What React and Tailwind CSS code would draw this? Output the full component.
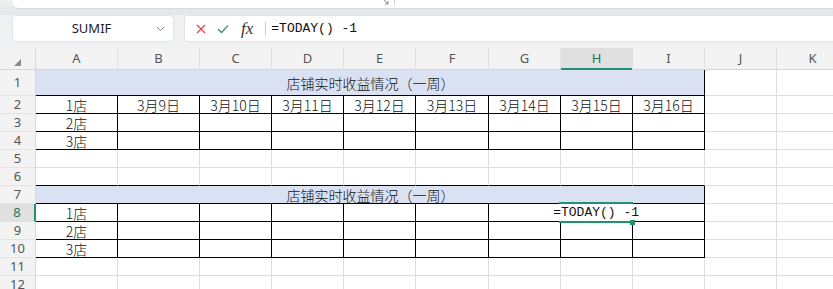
import React from "react";

const COLS = [
  { l: "A", w: 82 },
  { l: "B", w: 82 },
  { l: "C", w: 72 },
  { l: "D", w: 72 },
  { l: "E", w: 72 },
  { l: "F", w: 73 },
  { l: "G", w: 72 },
  { l: "H", w: 72 },
  { l: "I", w: 72 },
  { l: "J", w: 72 },
  { l: "K", w: 72 },
];

const DATES = ["3月9日", "3月10日", "3月11日", "3月12日", "3月13日", "3月14日", "3月15日", "3月16日"];
const TITLE = "店铺实时收益情况（一周）";
const cellFont = { fontFamily: '"Noto Sans CJK SC", "Noto Sans", sans-serif' };

function Cell({ children, black, blackB, blackR, noR, span, blue, h, active }) {
  const rb = noR ? "border-r-white" : black || blackR ? "border-r-black" : "border-r-[#dedede]";
  const bb = black || blackB ? "border-b-black" : "border-b-[#dedede]";
  return (
    <div
      className={
        "relative flex items-center justify-center border-r border-b text-[14px] font-light leading-[16px] text-[#111] whitespace-nowrap " +
        rb +
        " " +
        bb +
        " " +
        (blue ? "bg-[#d9e1f2] " : "bg-white ") +
        (span ? "col-span-9 " : "") +
        (active ? "z-10 " : "") +
        (h === 26 ? "h-[26px]" : "h-[18px]")
      }
      style={cellFont}
    >
      {children}
      {active && (
        <>
          <div className="absolute left-[-2px] right-[-1px] top-[-2px] h-[2px] bg-[#21926a]" />
          <div className="absolute left-[-2px] right-[-1px] bottom-[-2px] h-[2px] bg-[#21926a]" />
          <div className="absolute right-[-3px] bottom-[-4px] h-[5px] w-[5px] bg-[#21926a]" />
          <span
            className="absolute right-[-7px] top-[1px] text-[13px] font-normal leading-[16px] text-[#111]"
            style={{ fontFamily: '"Liberation Mono", monospace' }}
          >
            =TODAY() -1
          </span>
        </>
      )}
    </div>
  );
}

function RowHeader({ n, h, sel }) {
  return (
    <div
      className={
        "flex items-center justify-center border-b border-b-[#e3e3e3] text-[13px] leading-none " +
        (sel
          ? "bg-[#e0e0e0] text-[#1f7a58] border-r-2 border-r-[#21926a] "
          : "bg-[#f3f3f3] text-[#555] border-r border-r-[#d8d8d8] ") +
        (h === 26 ? "h-[26px]" : "h-[18px]")
      }
      style={{ fontFamily: '"Noto Sans", sans-serif' }}
    >
      {n}
    </div>
  );
}

function Sheet() {
  const rows = [];
  for (let r = 1; r <= 12; r++) {
    const h = r === 1 ? 26 : 18;
    rows.push(<RowHeader key={"h" + r} n={r} h={h} sel={r === 8} />);
    if (r === 1 || r === 7) {
      rows.push(
        <Cell key={r + "m"} span blue blackB blackR h={h}>
          <span className="pl-[1px]">{TITLE}</span>
        </Cell>
      );
      rows.push(<Cell key={r + "J"} h={h} />);
      rows.push(<Cell key={r + "K"} h={h} />);
      continue;
    }
    COLS.forEach((c, i) => {
      const inTable = i <= 8 && ((r >= 2 && r <= 4) || (r >= 8 && r <= 10));
      let content = null;
      if (inTable && i === 0) {
        const n = r <= 4 ? r - 1 : r - 7;
        content = n + "店";
      }
      if (r === 2 && i >= 1 && i <= 8) content = DATES[i - 1];
      const noR = r === 8 && (i === 6 || i === 7);
      rows.push(
        <Cell
          key={r + c.l}
          black={inTable}
          blackB={r === 6 && i <= 8}
          noR={noR}
          h={h}
          active={r === 8 && i === 7}
        >
          {content}
        </Cell>
      );
    });
  }

  return (
    <div className="grid grid-cols-[36px_82px_82px_72px_72px_72px_73px_72px_72px_72px_72px_72px] w-[849px]">
      <div className="relative h-[22px] bg-[#f3f3f3] border-b border-b-[#d6d6d6] border-r border-r-[#d8d8d8]">
        <svg className="absolute left-[14px] top-[11px]" width="7" height="7" viewBox="0 0 7 7">
          <polygon points="7,0 7,7 0,7" fill="#8a8a8a" />
        </svg>
      </div>
      {COLS.map((c) => (
        <div
          key={c.l}
          className={
            "relative flex h-[22px] items-center justify-center border-b border-b-[#d6d6d6] border-r border-r-[#e2e2e2] text-[13px] leading-none " +
            (c.l === "H" ? "bg-[#e0e0e0] text-[#1f6f50]" : "bg-[#f3f3f3] text-[#555]")
          }
          style={{ fontFamily: '"Noto Sans", sans-serif' }}
        >
          {c.l}
          {c.l === "H" && <div className="absolute bottom-[-1px] left-0 right-0 h-[2px] bg-[#21926a]" />}
        </div>
      ))}
      {rows}
    </div>
  );
}

export default function App() {
  return (
    <div className="h-[289px] w-[833px] overflow-hidden bg-[#eef0f2]">
      <div className="flex h-[15px] flex-col bg-gradient-to-b from-[#eef0f2] to-[#e2e5e9]">
        <div className="ml-[12px] flex h-[8px] items-start rounded-bl-[6px] bg-white shadow-[0_1px_1px_rgba(0,0,0,0.08)]">
          <div className="ml-[371px] flex items-start gap-[4px]">
            <svg width="7" height="5" viewBox="0 0 7 5">
              <path d="M1 0 L5 4 M2 4 H5 V1" stroke="#8a8a8a" strokeWidth="1" fill="none" />
            </svg>
            <div className="h-[5px] w-px bg-[#cfcfcf]" />
          </div>
        </div>
      </div>
      <div className="flex h-[30px] items-start gap-[10px] pl-[12px]">
        <div className="flex h-[27px] w-[162px] items-center rounded-[4px] border border-[#e2e4e7] bg-white">
          <span
            className="flex-1 pl-[14px] text-center text-[13px] text-[#222]"
            style={{ fontFamily: '"Noto Sans", sans-serif' }}
          >
            SUMIF
          </span>
          <svg className="mr-[8px]" width="9" height="6" viewBox="0 0 9 6">
            <path d="M1 1 L4.5 4.5 L8 1" stroke="#888" strokeWidth="1" fill="none" />
          </svg>
        </div>
        <div className="flex h-[27px] flex-1 items-center rounded-l-[4px] border border-r-0 border-[#e2e4e7] bg-white">
          <svg className="ml-[11px]" width="10" height="10" viewBox="0 0 10 10">
            <path d="M1 1 L9 9 M9 1 L1 9" stroke="#e0464d" strokeWidth="1.3" fill="none" />
          </svg>
          <svg className="ml-[11px]" width="12" height="10" viewBox="0 0 12 10">
            <path d="M1 5 L4.5 8.5 L11 1.5" stroke="#2b9a74" strokeWidth="1.3" fill="none" />
          </svg>
          <span
            className="ml-[12px] text-[17px] italic leading-none text-[#333]"
            style={{ fontFamily: '"Liberation Serif", serif' }}
          >
            fx
          </span>
          <div className="ml-[12px] h-[14px] w-px bg-[#d0d0d0]" />
          <span
            className="ml-[5px] text-[13px] text-[#111]"
            style={{ fontFamily: '"Liberation Mono", monospace' }}
          >
            =TODAY() -1
          </span>
        </div>
      </div>
      <div className="h-[3px]" />
      <Sheet />
    </div>
  );
}
